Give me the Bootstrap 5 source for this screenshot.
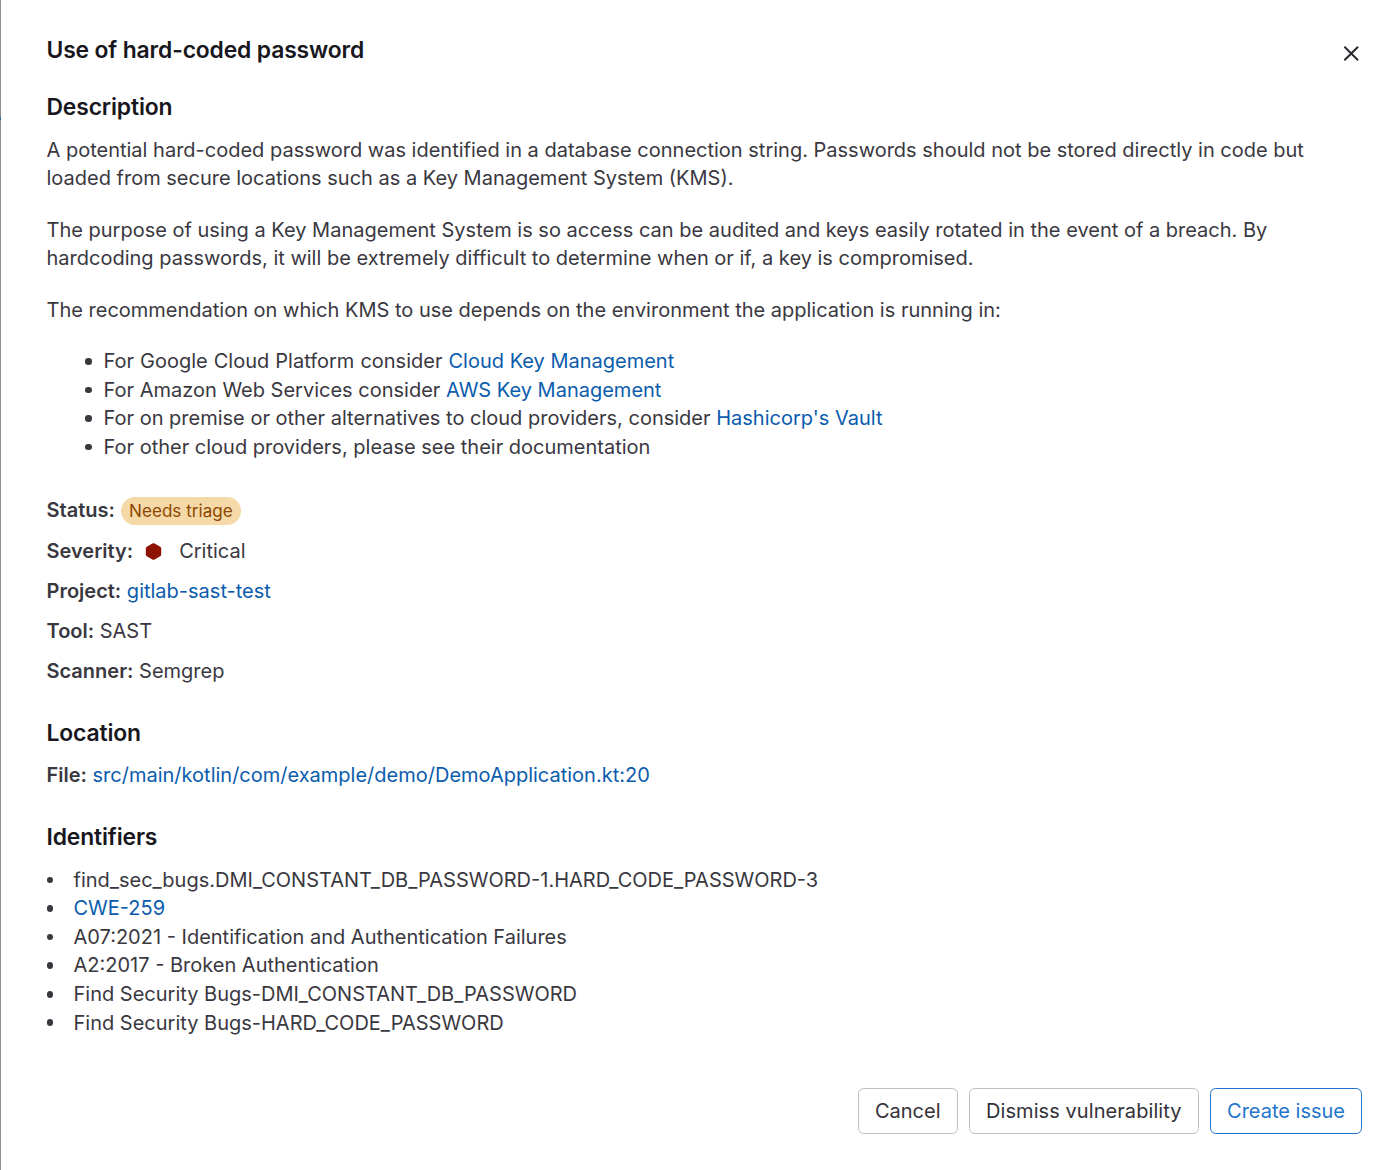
<!DOCTYPE html>
<html lang="en">
<head>
  <meta charset="UTF-8">
  <meta name="viewport" content="width=device-width, initial-scale=1.0">
  <title>Use of hard-coded password</title>
  <link href="https://cdn.jsdelivr.net/npm/bootstrap@5.3.0/dist/css/bootstrap.min.css" rel="stylesheet">
  <style>
    body {
      font-family: Inter, "Liberation Sans", sans-serif;
      font-size: 20px;
      line-height: 28.57px;
      color: #3a383f;
      background: #fff;
    }
    .vuln-panel {
      height: 1170px;
      padding: 36px 38px 36px 46.5px;
      /* sliver of the dimmed page at the left edge */
      background: linear-gradient(#8f8f92 117px, #38648f 117px, #38648f 120px, #8f8f92 120px) left top / 1px 100% no-repeat;
      overflow: hidden;
    }
    h2, h3 {
      font-size: 22.86px;
      line-height: 28.57px;
      font-weight: 600;
      letter-spacing: -0.14px;
      color: #18171d;
      margin: 0;
    }
    h3 { margin-bottom: 14.3px; }
    h3.section-title { margin-top: 33.35px; margin-bottom: 14px; }
    .description p { line-height: 28px; margin-bottom: 24px; }
    .description p:last-of-type { margin-bottom: 23.17px; }
    a { color: #0b5cad; text-decoration: none; }
    strong { font-weight: 600; }
    .vuln-header { margin-bottom: 28.4px; }
    .close-btn { margin: 7px 0.5px 0 0; color: #28272d; line-height: 0; }
    .dot-list { list-style: none; padding-left: 0; }
    .dot-list li { display: flex; align-items: center; white-space: pre; }
    .dot-list li::before {
      content: "";
      width: 6.6px;
      height: 6.6px;
      border-radius: 50%;
      background: #3a383f;
    }
    .kms-list { padding-left: 38.9px; margin-bottom: 35.6px; }
    .kms-list li::before { margin-right: 11.5px; }
    .kms-list li:first-child { word-spacing: 0.4px; }
    .kms-list li a { word-spacing: 0; }
    .id-list li::before { margin-right: 20.4px; }
    .detail-row { height: 28.57px; margin-bottom: 11.43px; }
    .triage-badge {
      font-size: 17.14px;
      line-height: 22.86px;
      padding: 2.86px 8.2px;
      margin-left: 6px;
      color: #8f4700;
      background: #f5d9a8;
    }
    .status-label { margin-top: -2px; }
    .severity-icon { margin: 0 13px 0 8px; }
    .btn-action {
      font-size: 20px;
      line-height: 22.86px;
      padding: 10.4px 16px;
      border-radius: 5.7px;
      color: #333238;
      border: 1px solid #bfbfc3;
    }
    .btn-action.btn-dismiss { letter-spacing: 0.07px; }
    .btn-action.btn-confirm { color: #1f75cb; border-color: #1f75cb; }
    .footer-actions { gap: 11.5px; }
  </style>
</head>
<body>
  <div class="vuln-panel d-flex flex-column">
    <header class="vuln-header d-flex justify-content-between align-items-start">
      <h2>Use of hard-coded password</h2>
      <a href="#" class="close-btn" aria-label="Close">
        <svg width="21" height="21" viewBox="0 0 16 16" fill="none" stroke="currentColor" stroke-width="1.5" stroke-linecap="round"><path d="M3 3.200l9.600 9.600M12.600 3.200l-9.600 9.600"/></svg>
      </a>
    </header>

    <!-- Description -->
    <section class="description">
      <h3>Description</h3>
      <p>A potential hard-coded password was identified in a database connection string. Passwords should not be stored directly in code but<br>loaded from secure locations such as a Key Management System (KMS).</p>
      <p>The purpose of using a Key Management System is so access can be audited and keys easily rotated in the event of a breach. By<br>hardcoding passwords, it will be extremely difficult to determine when or if, a key is compromised.</p>
      <p>The recommendation on which KMS to use depends on the environment the application is running in:</p>
      <ul class="dot-list kms-list">
        <li>For Google Cloud Platform consider <a href="#">Cloud Key Management</a></li>
        <li>For Amazon Web Services consider <a href="#">AWS Key Management</a></li>
        <li>For on premise or other alternatives to cloud providers, consider <a href="#">Hashicorp's Vault</a></li>
        <li>For other cloud providers, please see their documentation</li>
      </ul>
    </section>

    <!-- Details -->
    <div class="detail-row d-flex align-items-center"><strong class="status-label">Status:</strong><span class="triage-badge rounded-pill">Needs triage</span></div>
    <div class="detail-row d-flex align-items-center">
      <strong>Severity:</strong>
      <svg class="severity-icon" width="25" height="17" viewBox="0 0 25 17" fill="#8d1300"><path d="M12.5 0.3q.6 0 1.2.3l5.5 3.1q1 .6 1 1.7v6.2q0 1.100-1 1.700l-5.500 3.100q-1.200.6-2.400 0l-5.500-3.100q-1-.6-1-1.700V5.400q0-1.100 1-1.700l5.500-3.100q.6-.3 1.200-.3z"/></svg>
      <span>Critical</span>
    </div>
    <div class="detail-row"><strong>Project:</strong> <a href="#">gitlab-sast-test</a></div>
    <div class="detail-row"><strong>Tool:</strong> SAST</div>
    <div class="detail-row mb-0"><strong>Scanner:</strong> Semgrep</div>

    <h3 class="section-title">Location</h3>
    <div class="detail-row mb-0"><strong>File:</strong> <a href="#">src/main/kotlin/com/example/demo/DemoApplication.kt:20</a></div>

    <h3 class="section-title">Identifiers</h3>
    <ul class="dot-list id-list mb-0">
      <li>find_sec_bugs.DMI_CONSTANT_DB_PASSWORD-1.HARD_CODE_PASSWORD-3</li>
      <li><a href="#">CWE-259</a></li>
      <li>A07:2021 - Identification and Authentication Failures</li>
      <li>A2:2017 - Broken Authentication</li>
      <li>Find Security Bugs-DMI_CONSTANT_DB_PASSWORD</li>
      <li>Find Security Bugs-HARD_CODE_PASSWORD</li>
    </ul>

    <!-- Actions -->
    <footer class="footer-actions d-flex justify-content-end mt-auto">
      <button type="button" class="btn btn-action">Cancel</button>
      <button type="button" class="btn btn-action btn-dismiss">Dismiss vulnerability</button>
      <button type="button" class="btn btn-action btn-confirm">Create issue</button>
    </footer>
  </div>
  <script src="https://cdn.jsdelivr.net/npm/bootstrap@5.3.0/dist/js/bootstrap.bundle.min.js"></script>
</body>
</html>
